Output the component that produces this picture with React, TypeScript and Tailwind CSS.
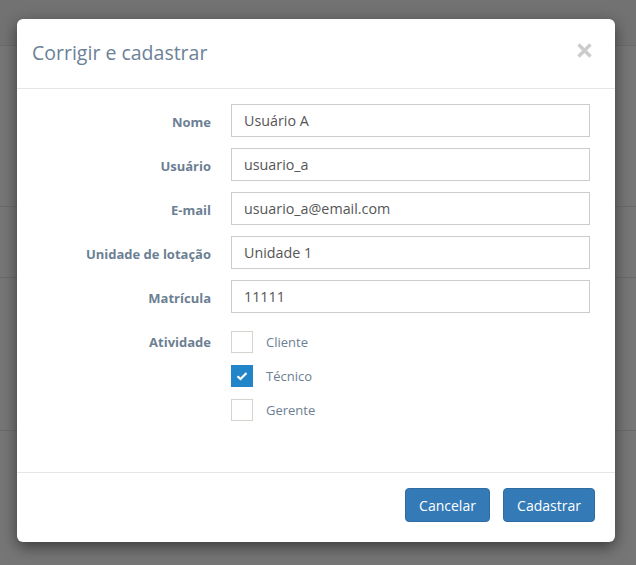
import React from "react";

const fields = [
  { label: "Nome", value: "Usuário A" },
  { label: "Usuário", value: "usuario_a" },
  { label: "E-mail", value: "usuario_a@email.com" },
  { label: "Unidade de lotação", value: "Unidade 1" },
  { label: "Matrícula", value: "11111" },
];

const acts = [
  { label: "Cliente", checked: false },
  { label: "Técnico", checked: true },
  { label: "Gerente", checked: false },
];

export default function App() {
  return (
    <div
      className="relative w-[636px] h-[565px] overflow-hidden bg-[#767676]"
      style={{ fontFamily: '"Open Sans", "Noto Sans", sans-serif' }}
    >
      <div className="flex flex-col">
        <div className="h-[46px] border-b border-[#6b6b6b] bg-[#727272]" />
        <div className="h-[161px] border-b border-[#6b6b6b]" />
        <div className="h-[71px] border-b border-[#6b6b6b]" />
        <div className="h-[153px] border-b border-[#6b6b6b]" />
      </div>

      <div className="absolute left-[17px] top-[19px] w-[598px] h-[523px] bg-white rounded-[6px] shadow-[0_5px_15px_rgba(0,0,0,0.5)] flex flex-col">
        <div className="h-[70px] border-b border-[#e5e5e5] flex items-center justify-between pl-[15px] pr-[22px]">
          <h4 className="text-[19.5px] text-[#6c8197] leading-none mt-[-2px]">Corrigir e cadastrar</h4>
          <svg width="17" height="17" viewBox="0 0 17 17" className="mt-[-6px]">
            <path d="M2.5 2.5 L14.5 14.5 M14.5 2.5 L2.5 14.5" stroke="#cccccc" strokeWidth="3.4" strokeLinecap="butt" />
          </svg>
        </div>

        <div className="flex-1 pt-[15px] flex flex-col gap-[11px]">
          {fields.map((f) => (
            <div key={f.label} className="flex items-center">
              <label className="w-[194px] text-right text-[13px] font-bold text-[#6c7f93] mt-[4px]">{f.label}</label>
              <div className="ml-[20px] w-[359px] h-[33px] border border-[#cccccc] flex items-center pl-[12px] text-[14.3px] text-[#555]">
                {f.value}
              </div>
            </div>
          ))}
          <div className="flex mt-[7px]">
            <label className="w-[194px] text-right text-[13px] font-bold text-[#6c7f93] pt-[2px]">Atividade</label>
            <div className="ml-[20px] flex flex-col gap-[12px]">
              {acts.map((a) => (
                <div key={a.label} className="flex items-center">
                  {a.checked ? (
                    <div className="w-[22px] h-[22px] bg-[#2385c9] flex items-center justify-center">
                      <svg width="12" height="10" viewBox="0 0 12 10">
                        <path d="M1.5 5.2 L4.5 8 L10.5 2" fill="none" stroke="white" strokeWidth="2.2" />
                      </svg>
                    </div>
                  ) : (
                    <div className="w-[22px] h-[22px] border border-[#d6d2cc] bg-white" />
                  )}
                  <span className="ml-[13px] text-[13px] text-[#6c7f93] mt-[1px]">{a.label}</span>
                </div>
              ))}
            </div>
          </div>
        </div>

        <div className="h-[70px] border-t border-[#e5e5e5] flex items-start justify-end gap-[13px] pr-[20px] pt-[15px]">
          <button className="h-[34px] w-[85px] rounded-[4px] bg-[#337ab7] border border-[#2e6da4] text-white text-[14px]">Cancelar</button>
          <button className="h-[34px] w-[92px] rounded-[4px] bg-[#337ab7] border border-[#2e6da4] text-white text-[14px]">Cadastrar</button>
        </div>
      </div>
    </div>
  );
}
